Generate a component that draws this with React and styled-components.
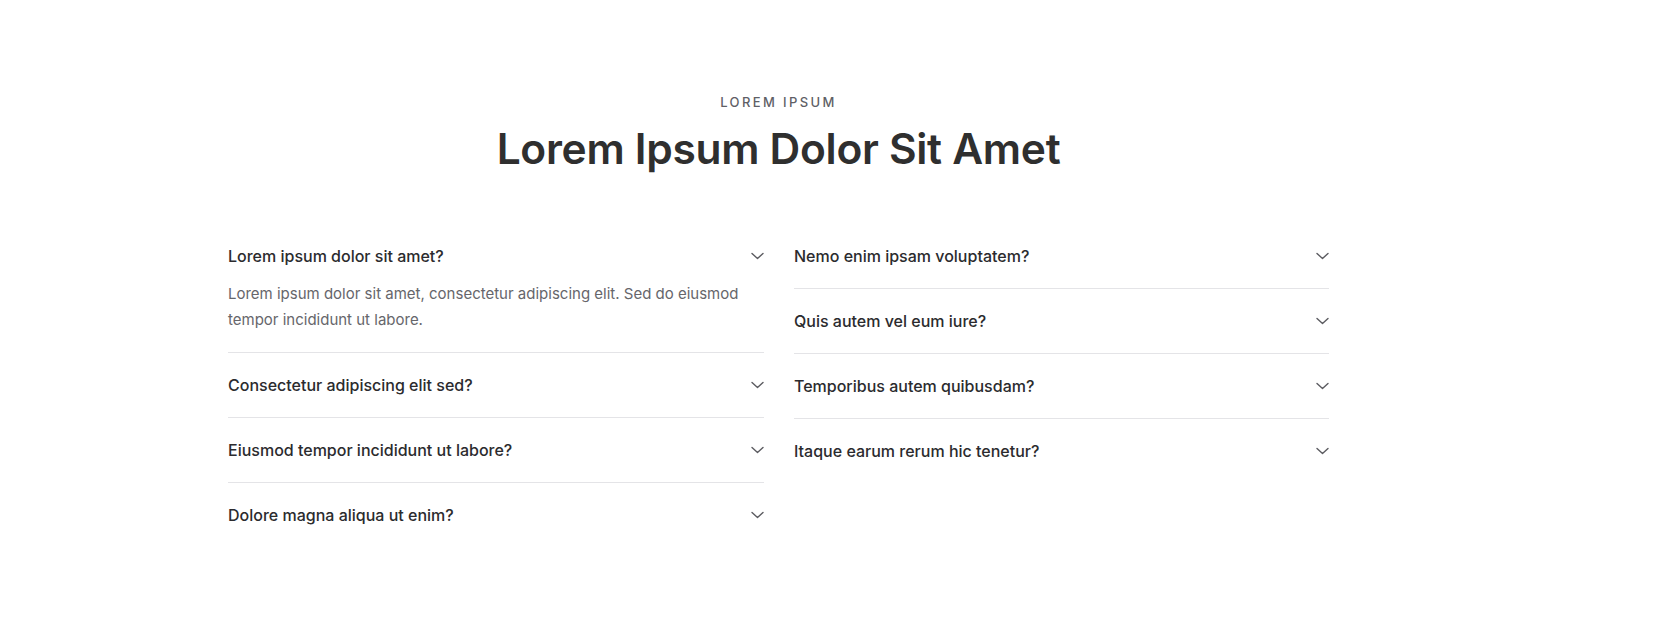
import React, { useState } from "react";
import styled, { createGlobalStyle } from "styled-components";

const GlobalStyle = createGlobalStyle`
  * {
    box-sizing: border-box;
  }
  body {
    margin: 0;
    background: #ffffff;
    font-family: Inter, "Noto Sans", sans-serif;
  }
`;

const LEFT = [
  {
    q: "Lorem ipsum dolor sit amet?",
    a: "Lorem ipsum dolor sit amet, consectetur adipiscing elit. Sed do eiusmod tempor incididunt ut labore.",
  },
  { q: "Consectetur adipiscing elit sed?", a: "Sed ut perspiciatis unde omnis iste natus error sit voluptatem." },
  { q: "Eiusmod tempor incididunt ut labore?", a: "Ut enim ad minima veniam, quis nostrum exercitationem." },
  { q: "Dolore magna aliqua ut enim?", a: "Duis aute irure dolor in reprehenderit in voluptate velit esse." },
];

const RIGHT = [
  { q: "Nemo enim ipsam voluptatem?", a: "Quia voluptas sit aspernatur aut odit aut fugit." },
  { q: "Quis autem vel eum iure?", a: "Qui in ea voluptate velit esse quam nihil molestiae consequatur." },
  { q: "Temporibus autem quibusdam?", a: "Et aut officiis debitis aut rerum necessitatibus saepe eveniet." },
  { q: "Itaque earum rerum hic tenetur?", a: "A sapiente delectus, ut aut reiciendis voluptatibus maiores alias." },
];

const Chevron = () => (
  <ChevronSvg width="13" height="8" viewBox="0 0 13 8" aria-hidden="true">
    <path
      d="M1 1.5l5.5 5 5.5-5"
      fill="none"
      stroke="currentColor"
      strokeWidth="1.4"
      strokeLinecap="round"
      strokeLinejoin="round"
    />
  </ChevronSvg>
);

const FaqItem = ({ item, open, onToggle, last }) => (
  <Item $last={last}>
    <Question type="button" onClick={onToggle}>
      <span>{item.q}</span>
      <Chevron />
    </Question>
    {open && <Answer>{item.a}</Answer>}
  </Item>
);

const Column = ({ items, openKey, prefix, onToggle }) => (
  <List>
    {items.map((item, i) => {
      const key = prefix + i;
      return (
        <FaqItem
          key={key}
          item={item}
          open={openKey === key}
          onToggle={() => onToggle(key)}
          last={i === items.length - 1}
        />
      );
    })}
  </List>
);

const App = () => {
  const [openKey, setOpenKey] = useState("l0");
  const toggle = (key) => setOpenKey((cur) => (cur === key ? null : key));

  return (
    <>
      <GlobalStyle />
      <Section>
        <Container>
          <Header>
            <Eyebrow>Lorem Ipsum</Eyebrow>
            <Title>Lorem Ipsum Dolor Sit Amet</Title>
          </Header>
          <Grid>
            <Column items={LEFT} prefix="l" openKey={openKey} onToggle={toggle} />
            <Column items={RIGHT} prefix="r" openKey={openKey} onToggle={toggle} />
          </Grid>
        </Container>
      </Section>
    </>
  );
};

const Section = styled.section`
  padding: 92px 0 80px 228px;
`;

const Container = styled.div`
  width: 1101px;
`;

const Header = styled.header`
  display: flex;
  flex-direction: column;
  align-items: center;
  text-align: center;
  margin-bottom: 50px;
`;

const Eyebrow = styled.p`
  margin: 0 0 12px;
  font-size: 13px;
  line-height: 20px;
  font-weight: 500;
  letter-spacing: 2.4px;
  text-transform: uppercase;
  color: #5f5f66;
`;

const Title = styled.h2`
  margin: 0;
  font-size: 42.5px;
  line-height: 50px;
  font-weight: 600;
  letter-spacing: -0.3px;
  color: #2f2f2f;
`;

const Grid = styled.div`
  display: grid;
  grid-template-columns: 536px 535px;
  column-gap: 30px;
  align-items: start;
`;

const List = styled.div`
  display: flex;
  flex-direction: column;
`;

const Item = styled.div`
  border-bottom: ${(p) => (p.$last ? "none" : "1px solid #e4e4e7")};
`;

const Question = styled.button`
  display: flex;
  align-items: center;
  justify-content: space-between;
  width: 100%;
  padding: 20px 0;
  border: 0;
  background: none;
  cursor: pointer;
  font-family: inherit;
  font-size: 16px;
  line-height: 24px;
  font-weight: 500;
  color: #2b2b2e;
  text-align: left;
`;

const ChevronSvg = styled.svg`
  flex-shrink: 0;
  color: #5b5b60;
`;

const Answer = styled.p`
  margin: -7px 0 0;
  padding: 0 20px 19px 0;
  font-size: 15px;
  line-height: 26px;
  color: #66666b;
`;

export default App;
